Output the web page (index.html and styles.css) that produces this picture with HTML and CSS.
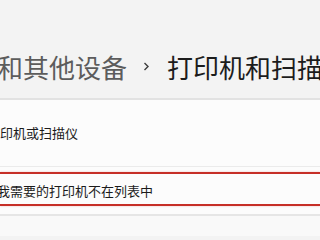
FILE: index.html
```html
<!DOCTYPE html>
<html lang="zh-CN">
<head>
<meta charset="utf-8">
<link rel="stylesheet" href="styles.css">
</head>
<body>
<div class="header">
  <span class="crumb-parent">和其他设备</span>
  <svg class="chev" width="7" height="9" viewBox="0 0 7 9"><path d="M1.5 1 L5 4.5 L1.5 8" fill="none" stroke="#3c3c3c" stroke-width="1.4"/></svg>
  <span class="crumb-current">打印机和扫描仪</span>
</div>
<div class="panel">
  <div class="row row-add"><span class="label">印机或扫描仪</span></div>
  <div class="gap"></div>
  <div class="row row-missing"><span class="label label-cut">我需要的打印机不在列表中</span></div>
  <div class="gap2"></div>
  <div class="row row-next"></div>
</div>
</body>
</html>
```
FILE: styles.css
```css
html, body {
  margin: 0;
  padding: 0;
  background: #f3f3f3;
  overflow: hidden;
  font-family: "Noto Sans CJK SC", "Noto Sans", sans-serif;
}
.header {
  height: 98px;
  box-sizing: border-box;
  padding-top: 49px;
  display: flex;
  align-items: flex-start;
  white-space: nowrap;
}
.crumb-parent, .crumb-current {
  font-size: 26px;
  line-height: 36px;
  flex: none;
}
.crumb-parent {
  color: #5c5c5c;
  margin-left: -3px;
}
.crumb-current {
  color: #1c1c1c;
}
.chev {
  flex: none;
  display: block;
  margin: 13px 17px 0 16px;
}
.panel {
  border-top: 2px solid #e2e2e2;
  background: #fcfcfc;
}
.row {
  display: flex;
  align-items: center;
  white-space: nowrap;
  font-size: 13px;
  color: #1b1b1b;
}
.label {
  line-height: 16px;
}
.row-add {
  height: 66px;
  border-bottom: 1px solid #ebebeb;
}
.gap {
  height: 5px;
}
.row-missing {
  border-top: 2px solid #c62f27;
  border-bottom: 2px solid #c62f27;
  box-shadow: 0 0 2px rgba(220, 80, 80, 0.35);
  padding-top: 3px;
  height: 27px;
}
.label-cut {
  margin-left: -3px;
}
.gap2 {
  height: 8px;
}
.row-next {
  height: 20px;
  border-top: 2px solid #e6e6e6;
  background: #f9f9f9;
}
```
